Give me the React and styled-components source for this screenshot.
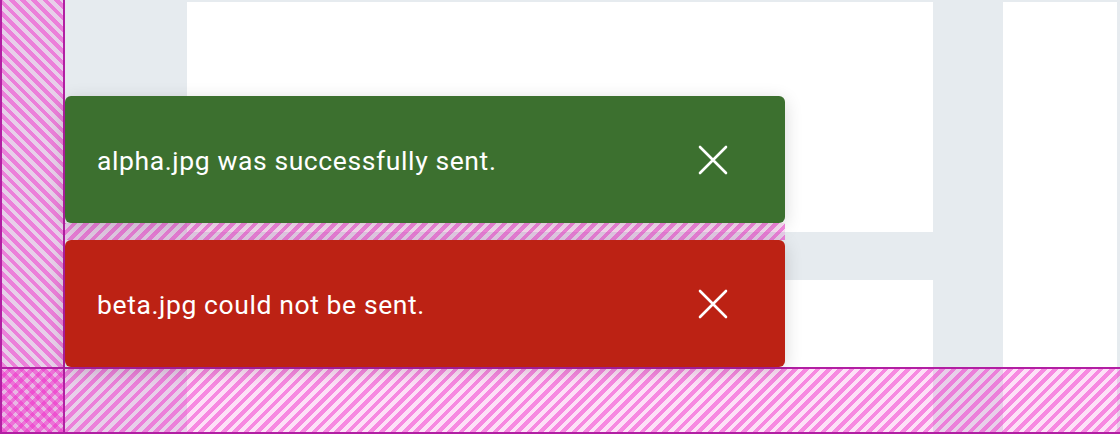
import React from "react";
import styled, { createGlobalStyle, css } from "styled-components";

const GlobalStyle = createGlobalStyle`
  html, body {
    margin: 0;
    padding: 0;
  }
  body {
    font-family: Roboto, "Liberation Sans", sans-serif;
    background: #e6ebef;
  }
`;

const toasts = [
  { id: "alpha", tone: "success", message: "alpha.jpg was successfully sent." },
  { id: "beta", tone: "error", message: "beta.jpg could not be sent." },
];

const CloseIcon = () => (
  <svg width="30" height="30" viewBox="0 0 30 30" fill="none">
    <path
      d="M2 2 L28 28 M28 2 L2 28"
      stroke="#fff"
      strokeWidth="2.6"
      strokeLinecap="round"
    />
  </svg>
);

const App = () => (
  <>
    <GlobalStyle />
    <Page>
      <Backdrop>
        <MainColumn>
          <Card $height={230} />
          <Card $grow />
        </MainColumn>
        <SideCard />
      </Backdrop>

      <Stack>
        {toasts.map((toast, i) => (
          <React.Fragment key={toast.id}>
            {i > 0 && <GapHatch />}
            <Toast $tone={toast.tone}>
              <Message>{toast.message}</Message>
              <CloseButton aria-label="Dismiss">
                <CloseIcon />
              </CloseButton>
            </Toast>
          </React.Fragment>
        ))}
      </Stack>

      <LeftHatch />
      <BottomHatch />
      <CornerHatch />
    </Page>
  </>
);

export default App;

const Page = styled.div`
  position: relative;
  width: 1120px;
  height: 434px;
  overflow: hidden;
  background: #e6ebef;
`;

// background layout behind the toasts
const Backdrop = styled.div`
  display: grid;
  grid-template-columns: 746px 114px;
  column-gap: 70px;
  height: 100%;
  box-sizing: border-box;
  padding: 2px 3px 0 187px;
`;

const MainColumn = styled.div`
  display: flex;
  flex-direction: column;
  gap: 48px;
`;

const Card = styled.div`
  background: #fff;
  height: ${({ $height }) => ($height ? `${$height}px` : "auto")};
  flex: ${({ $grow }) => ($grow ? 1 : "none")};
`;

const SideCard = styled.div`
  background: #fff;
`;

// toasts
const Stack = styled.div`
  position: absolute;
  left: 65px;
  bottom: 67px;
  width: 720px;
  display: flex;
  flex-direction: column;
  z-index: 2;
`;

const tones = {
  success: "#3c702f",
  error: "#bc2214",
};

const Toast = styled.div`
  display: flex;
  align-items: center;
  justify-content: space-between;
  height: 127px;
  box-sizing: border-box;
  padding: 0 57px 0 32px;
  border-radius: 6px;
  background: ${({ $tone }) => tones[$tone]};
  box-shadow: 0 4px 18px rgba(0, 0, 0, 0.16);
  position: relative;
  z-index: 1;
`;

const Message = styled.span`
  color: #fff;
  font-size: 26.5px;
  letter-spacing: 0.6px;
  margin-top: 2px;
`;

const CloseButton = styled.button`
  display: flex;
  align-items: center;
  justify-content: center;
  padding: 0;
  border: 0;
  background: transparent;
  cursor: pointer;
`;

// spacing overlays
const stripes = (angle) => css`
  repeating-linear-gradient(
    ${angle},
    rgba(240, 40, 200, 0.55) 0 4px,
    rgba(240, 40, 200, 0.14) 4px 8px
  )
`;

const hatch = (angle) => css`
  background: ${stripes(angle)};
`;

const GapHatch = styled.div`
  height: 17px;
  ${hatch("-45deg")};
`;

const LeftHatch = styled.div`
  position: absolute;
  left: 0;
  top: 0;
  width: 65px;
  height: 367px;
  box-sizing: border-box;
  border-left: 2px solid #b21fa3;
  border-right: 2px solid #b21fa3;
  ${hatch("45deg")};
  z-index: 1;
`;

const BottomHatch = styled.div`
  position: absolute;
  left: 0;
  bottom: 0;
  width: 1120px;
  height: 67px;
  box-sizing: border-box;
  border-top: 2px solid #b21fa3;
  border-bottom: 2px solid #b21fa3;
  ${hatch("-45deg")};
  z-index: 1;
`;

const CornerHatch = styled.div`
  position: absolute;
  left: 0;
  bottom: 0;
  width: 65px;
  height: 67px;
  box-sizing: border-box;
  border: 2px solid #b21fa3;
  background: ${stripes("45deg")}, ${stripes("-45deg")}, #e6ebef;
  z-index: 1;
`;
